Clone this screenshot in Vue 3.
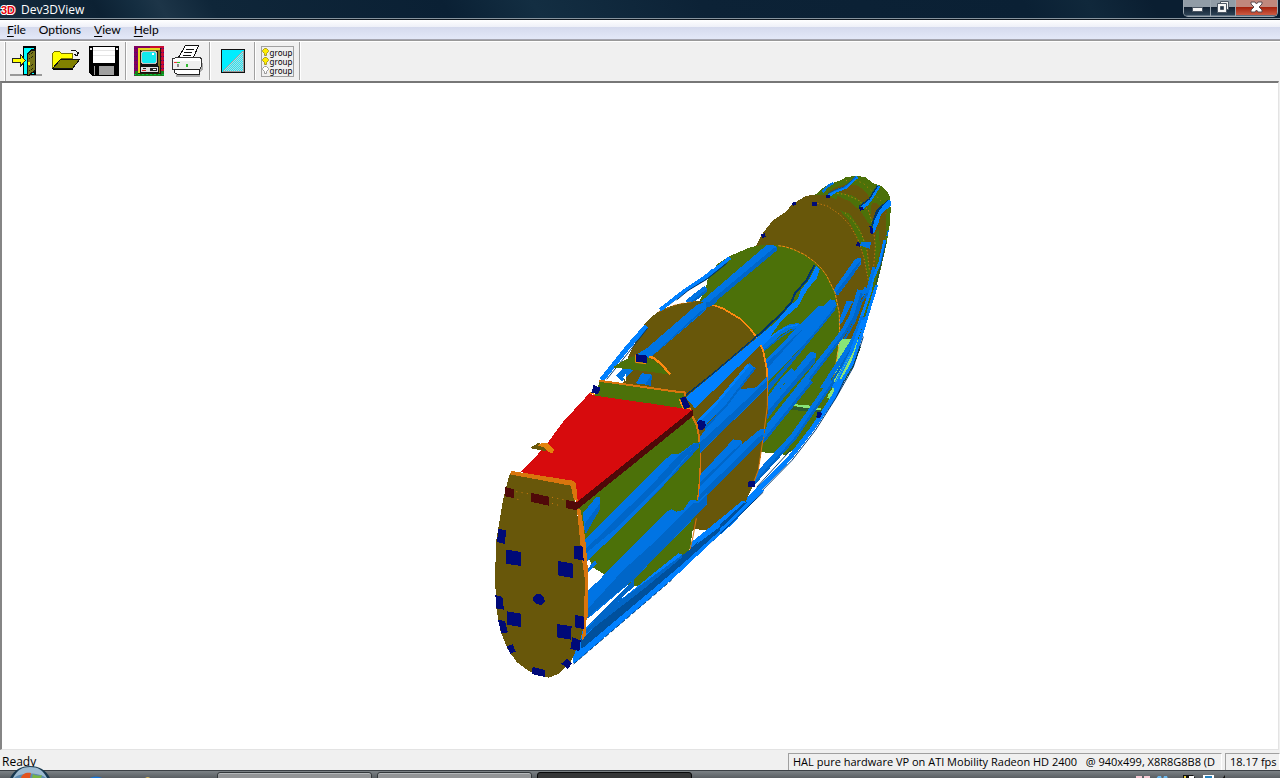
<script setup>
const menus = ['File', 'Options', 'View', 'Help']

const ORANGE = '#d9750d'
const GLOW = '#ff8a10'
const OLIVE = '#68570a'
const GREEN = '#4c7109'
const LIGHT = '#0080ff'
const MID = '#0074e4'
const SHADE = '#0066c8'
const DEEP = '#00509c'
const DARK = '#00366c'
const NAVY = '#000a78'
const WHITE = '#ffffff'
const MINT = '#88e577'
const MOSS = '#2d5a2d'

/* Every shape is [colour, points, stroke width?, dash?]; each layer has its own origin and is drawn at one third scale. */
const layers = [
  {
    name: 'tail', x: 740, y: 160,
    shapes: [
      [GREEN, '225,105 245,86 262,76 282,68 300,62 318,51 350,48 375,51 400,70 425,78 440,92 450,110 452,150 450,190 440,250 424,320 400,415 375,485 350,567 290,540 300,200'],
      [OLIVE, '262,98 285,82 318,73 350,75 372,90 390,112 380,125 350,112 320,106 290,105'],
      [OLIVE, '395,130 410,128 420,140 440,150 437,230 425,270 405,330 390,400 375,440 385,330 405,270 390,190'],
      [OLIVE, '290,98 330,96 372,120 398,175 405,260 400,330 370,460 345,540 280,540'],
      [GREEN, '270,95 300,97 340,108 372,130 398,180 400,210 382,184 360,152 330,125 290,106'],
      [GREEN, '407,220 417,210 420,270 408,320 405,280'],
      [GREEN, '320,58 350,50 378,52 398,70 424,80 444,102 446,140 430,138 415,120 390,90 360,72'],
      [GLOW, '318,62 345,60 370,70 400,98 425,125 437,160', 2, '3 11'],
      [GLOW, '270,98 315,103 355,120 385,150 400,200 406,260 400,330', 2, '4 7'],
      [OLIVE, '48,257 70,217 100,180 135,157 160,130 200,107 250,104 290,118 330,146 360,195 380,255 389,330 386,380 370,480 345,538 285,538 200,350'],
      [GREEN, '298,150 330,162 358,203 377,250 389,330 388,375 378,320 367,270 346,220 326,182'],
      [GLOW, '232,130 262,138 300,164 330,196 354,239 371,290 386,365', 2, '4 6'],
      [GLOW, '315,158 342,185 366,225 382,275 388,330', 2, '4 7'],
      [LIGHT, '264,108 288,93 317,82 352,50', 9],
      [DEEP, '264,101 284,91 314,80 348,50', 3],
      [MID, '248,96 264,78 281,69', 7],
      [LIGHT, '363,145 382,131 400,105 416,78', 10],
      [DARK, '358,139 388,117 399,99 412,78', 4],
      [DARK, '394,194 407,154 422,138 445,118 450,126 424,151 402,200'],
      [LIGHT, '397,207 402,184 420,148 445,119 454,125 452,138 434,153 423,163 416,187 401,222'],
      [MID, '363,246 393,245 390,267 380,263 360,257'],
      [NAVY, '258,105 270,105 270,113 258,113'],
      [NAVY, '356,142 368,140 371,149 360,152'],
      [NAVY, '388,198 397,200 400,222 391,220'],
      [NAVY, '350,246 360,248 359,260 349,258'],
      [NAVY, '216,126 231,126 231,137 216,137'],
      [NAVY, '155,130 165,125 170,132 160,137'],
      [NAVY, '63,222 74,220 78,231 67,234'],
      [MID, '346,296 363,294 363,312 295,405 278,402 285,383'],
      [SHADE, '357,306 363,304 340,345 292,407 285,400'],
      [MID, '320,422 340,423 305,490 294,499 298,480'],
      [MID, '445,210 441,228', 4],
      [LIGHT, '435,240 419,310 398,355 389,400 365,470 333,560', 9],
      [MID, '402,322 386,380 376,415', 10],
      [MID, '380,384 352,420 330,485 295,545', 13],
      [SHADE, '382,400 364,427 345,482 310,545', 6],
      [DARK, '437,250 416,340 400,405 375,475 351,560', 2]
    ]
  },
  {
    name: 'rear hull', x: 660, y: 230,
    shapes: [
      [MINT, '538,326 606,326 590,372 545,455 510,510 485,548 390,530 515,490'],
      [GREEN, '140,165 145,135 175,100 210,78 270,52 300,46 340,45 372,48 400,58 434,74 463,95 484,115 500,137 525,188 538,250 539,310 531,380 520,460 505,520 488,550 465,585 425,640 375,672 310,670 200,500 120,210'],
      [GLOW, '355,47 375,50 400,58 434,74 463,95 484,115 500,137 525,188 538,250 539,330 528,400 518,470', 3, '9 3'],
      [LIGHT, '0,240 70,185 140,140 210,83', 11],
      [DARK, '30,222 84,180 145,144 202,98', 3],
      [WHITE, '80,212 137,165 137,175 93,216'],
      [MID, '80,217 138,172', 13],
      [SHADE, '96,217 140,182', 7],
      [MID, '0,318 120,217 320,45 350,47 345,60 120,240 0,350'],
      [SHADE, '0,344 135,226 340,55 350,52 350,62 172,210 0,364'],
      [MINT, '390,523 435,524 485,536 486,542 440,537'],
      [MOSS, '385,528 440,533 490,543 485,550 400,540'],
      [MINT, '585,340 553,430 505,505', 12],
      [MOSS, '600,350 579,406 530,488', 6],
      [MINT, '535,472 505,510', 4, '4 4']
    ]
  },
  {
    name: 'rear stringers', x: 660, y: 230,
    shapes: [
      [MID, '280,375 325,340 360,307 390,290 419,286', 15],
      [LIGHT, '292,355 340,315 378,292 414,284', 4],
      [SHADE, '300,372 350,330 390,302 424,292', 4],
      [DARK, '463,106 440,150 405,190 394,217 365,250 290,320 165,427 80,510', 6],
      [LIGHT, '280,332 345,278 390,227 413,207 423,180 450,145 468,108 480,117 470,145 442,178 414,229 366,270 312,345 280,370'],
      [MID, '300,405 318,390 385,320 477,228 498,231 497,255 290,455'],
      [SHADE, '285,433 402,320 490,247 505,237 505,255 450,315 285,476'],
      [MID, '290,450 510,208 525,211 530,228 470,305 290,490'],
      [SHADE, '320,470 470,300 528,226 525,240 485,290 320,492'],
      [MID, '320,527 450,366 467,368 467,384 320,558'],
      [SHADE, '320,548 463,380 466,396 362,515 320,570'],
      [MID, '600,180 575,260 550,305 515,350 325,590', 16],
      [SHADE, '605,190 584,260 556,308 521,355 340,590', 7],
      [MID, '408,600 505,447 575,340 610,260', 14],
      [SHADE, '422,603 511,462 582,345', 7],
      [LIGHT, '610,270 574,365 520,475', 10],
      [MINT, '568,380 526,457', 3, '4 5'],
      [LIGHT, '650,165 625,245 606,310 577,400 530,480 480,565 430,630', 9],
      [DARK, '610,320 580,411 535,491 470,585 430,639', 3],
      [NAVY, '472,545 486,550 480,566 470,563']
    ]
  },
  {
    name: 'lower hull', x: 660, y: 380,
    shapes: [
      [WHITE, '310,217 375,224 330,280 280,325 290,275'],
      [GREEN, '310,215 310,170 440,30 515,20 487,88 430,180 380,225'],
      [MINT, '390,73 435,74 485,86 482,91 435,87'],
      [MOSS, '390,80 435,83 490,92 485,99 390,89'],
      [MID, '400,-30 370,0 320,68 305,100', 16],
      [MID, '450,0 325,152 280,213', 21],
      [SHADE, '456,4 334,155 284,217', 8],
      [MID, '515,2 398,170 274,305', 16],
      [SHADE, '522,4 406,175 280,314', 7],
      [LIGHT, '545,0 521,50 458,145 388,235 250,375', 14],
      [DARK, '392,210 290,322', 3],
      [DARK, '553,0 529,52 466,151 396,241 255,384', 3],
      [NAVY, '472,96 487,98 480,115 469,112']
    ]
  },
  {
    name: 'middle bulkhead', x: 580, y: 240,
    shapes: [
      [OLIVE, '130,430 145,350 195,250 215,230 240,212 270,199 300,191 350,183 385,187 430,205 480,235 508,262 530,290 551,330 562,400 563,520 550,600 536,690 515,745 490,800 455,845 420,870 335,870 250,500'],
      [GLOW, '381,188 430,206 480,236 508,263 530,292 549,330 560,385 562,410', 5],
      [ORANGE, '563,410 562,500 550,590 535,690 520,730', 3],
      [ORANGE, '236,215 290,193 345,184', 2, '15 7'],
      [LIGHT, '65,420 145,320 200,258', 15],
      [DARK, '80,418 145,338 203,264', 3],
      [LIGHT, '240,210 310,155 375,112 400,91', 11],
      [WHITE, '276,195 310,168 365,135 345,154 316,185'],
      [DARK, '290,180 325,151 380,118 438,72', 3],
      [MID, '172,342 200,325 350,195 380,184 378,210 210,354'],
      [SHADE, '211,352 360,215 379,205 378,185 411,184 400,195 379,204 350,232 225,341'],
      [MID, '108,408 130,384 170,350 172,380 125,425'],
      [WHITE, '90,411 108,388 120,386 103,414'],
      [WHITE, '137,401 130,413 138,424'],
      [MID, '168,430 185,400 214,402 214,436'],
      [SHADE, '195,433 215,404 214,438']
    ]
  },
  {
    name: 'side stringers', x: 660, y: 380,
    shapes: [
      [LIGHT, '77,52 285,-122 320,-150 335,-150 310,-112 105,85'],
      [DARK, '75,48 158,-19 290,-131', 4],
      [MID, '0,252 103,193 231,23 247,27 290,22 322,-10 322,22 115,225 0,330'],
      [SHADE, '0,290 118,190 250,68 322,0 322,20 118,220 0,334'],
      [MID, '123,133 185,67 277,-43', 25],
      [LIGHT, '112,128 179,58 265,-45', 8],
      [SHADE, '135,145 200,75 285,-36', 6],
      [NAVY, '110,127 120,120 134,124 138,136 131,148 118,151 108,143'],
      [MID, '120,285 220,178 246,182 247,192 300,148 314,148 310,175 112,370 112,342'],
      [SHADE, '120,307 245,188 240,200 121,318'],
      [SHADE, '119,345 295,172 310,162 309,178 112,375'],
      [WHITE, '102,448 155,450 95,492'],
      [MID, '0,415 24,390 50,390 92,360 110,360 107,378 0,505'],
      [SHADE, '0,470 107,370 105,382 0,510'],
      [LIGHT, '90,490 195,405 247,362 264,368 300,325 312,332 215,434 128,510 92,510'],
      [DEEP, '90,506 195,420 250,370 265,365 240,390 115,508'],
      [DARK, '310,336 210,433 130,508', 3],
      [NAVY, '266,302 286,302 284,322 263,320']
    ]
  },
  {
    name: 'forward bulkhead', x: 480, y: 340,
    shapes: [
      [GREEN, '290,500 480,350 632,215 650,260 659,310 662,360 657,460 644,530 630,625 603,690 575,718 530,737 460,740 400,720 340,683 310,620'],
      [ORANGE, '637,228 650,255 657,290 657,307', 6],
      [ORANGE, '662,340 660,400 656,455 652,480', 4],
      [ORANGE, '649,535 639,590 624,655 603,688', 3],
      [MID, '308,520 350,470 360,472 360,508 315,582'],
      [SHADE, '315,550 360,490 360,508 317,582'],
      [MID, '315,598 560,355 575,342 595,343 640,310 660,307 655,325 510,480 330,655 315,670'],
      [SHADE, '345,600 515,435 590,353 600,343 640,311 658,309 655,325 510,480 330,655 315,660 315,630'],
      [MID, '317,640 420,555 550,425 640,325 560,425 430,560 330,655 317,665'],
      [MID, '322,755 565,512 575,508 590,515 610,510 630,480 655,482 680,460 680,495 460,720 325,835 320,800'],
      [SHADE, '430,690 530,600 640,490 657,488 680,465 680,493 460,720 350,808 322,835 322,808'],
      [WHITE, '325,714 325,750 368,711 340,683'],
      [MID, '320,690 345,660 351,672 322,700'],
      [WHITE, '425,778 460,738 475,738 425,780'],
      [SHADE, '320,860 462,718 462,740 425,772 425,780 325,872']
    ]
  },
  {
    name: 'keel stringers', x: 480, y: 500,
    shapes: [
      [LIGHT, '280,402 315,385 595,160 615,167 720,60 720,99 280,491'],
      [DEEP, '302,420 370,358 520,235 600,171 720,80 720,92 610,190 305,449'],
      [LIGHT, '284,480 304,448 585,212 720,94 720,103 580,235 281,492'],
      [SHADE, '317,390 355,350 430,294 605,166 606,172 500,260 317,402'],
      [DARK, '281,492 575,240', 3, '14 7']
    ]
  },
  {
    name: 'cockpit', x: 480, y: 340,
    shapes: [
      [GREEN, '398,82 430,62 466,46 500,50 530,65 566,103 490,93'],
      [GLOW, '507,51 520,53 545,73 570,103', 7],
      [GLOW, '467,44 467,67 498,71', 3],
      [NAVY, '469,43 502,47 500,69 469,65'],
      [GREEN, '340,172 360,123 607,158 632,214 515,196'],
      [ORANGE, '356,122 604,157 614,157 614,167', 6],
      [GLOW, '599,178 610,208 632,207', 4],
      [GLOW, '330,158 344,163', 4],
      [NAVY, '341,135 362,144 354,163 334,158'],
      [NAVY, '600,174 616,170 631,201 613,208'],
      ['#d70b0d', '328,160 345,167 515,191 638,210 445,382 291,495 275,430 123,396 195,320 225,278 250,245'],
      ['#500909', '638,209 638,229 445,385 287,512 259,504 259,481 291,486 420,383'],
      [OLIVE, '150,324 175,309 199,318 198,334'],
      ['#e4830c', '172,316 185,309 202,310 216,322 224,329 216,340 202,333 190,322'],
      [OLIVE, '89,402 273,433 290,510 305,610 319,690 318,790 311,860 298,910 272,965 239,1000 206,1013 180,1008 145,992 109,965 82,925 62,875 49,805 45,710 49,600 70,475'],
      ['#d9750d', '89,403 95,393 278,422 288,432 293,483 282,480 272,437'],
      [ORANGE, '291,508 301,508 311,560 317,610 323,680 323,830 317,850 317,887 306,902 312,820 315,720 305,650'],
      ['#500909', '76,441 102,448 101,474 76,469'],
      ['#500909', '154,459 207,470 207,497 154,486'],
      ['#500909', '259,480 291,486 325,480 288,511 259,504'],
      [GLOW, '109,455 150,462', 2, '3 13'],
      [GLOW, '216,472 255,480', 2, '3 13'],
      [GLOW, '112,478 150,485', 2, '3 60'],
      [GLOW, '216,490 242,498', 2, '3 13']
    ]
  },
  {
    name: 'front slots', x: 480, y: 500,
    shapes: [
      [NAVY, '55,86 78,91 75,132 51,126'],
      [NAVY, '79,149 123,156 123,198 78,191'],
      [NAVY, '235,183 279,191 278,234 234,226'],
      [NAVY, '283,137 309,140 311,182 282,176'],
      [NAVY, '46,285 67,291 72,329 49,325'],
      [NAVY, '82,334 123,341 122,381 81,374'],
      [NAVY, '232,372 275,379 272,419 231,412'],
      [NAVY, '286,345 312,350 311,387 286,382'],
      [NAVY, '54,360 75,363 84,397 64,400'],
      [NAVY, '80,439 98,433 107,455 91,461'],
      [NAVY, '277,412 302,421 298,454 271,446'],
      [NAVY, '260,476 275,491 264,507 244,491'],
      [NAVY, '158,501 195,510 195,531 155,522'],
      [NAVY, '160,292 168,283 180,281 193,292 194,306 184,315 171,312 160,304']
    ]
  }
]
</script>

<template>
  <div class="desktop">
    <main class="window">
      <header class="titlebar">
        <svg class="logo" width="16" height="14" viewBox="0 0 16 14" aria-hidden="true">
          <text x="1" y="11">3D</text>
        </svg>
        <h1>Dev3DView</h1>
        <div class="controls">
          <button type="button" class="ctl min" aria-label="Minimize">
            <svg width="13" height="12"><path d="M1.500 6.500h10v4h-10z" fill="#f4f4f4" stroke="#4b5663" /></svg>
          </button>
          <button type="button" class="ctl max" aria-label="Restore">
            <svg width="13" height="12"><path d="M3.500.5h8v8h-8z" fill="#f4f4f4" stroke="#4b5663" /><path d="M.5 2.500h9v9h-9z" fill="#f4f4f4" stroke="#4b5663" /><path d="M3.500 5.500h3v3h-3z" fill="#243648" stroke="#4b5663" /></svg>
          </button>
          <button type="button" class="ctl close" aria-label="Close">
            <svg width="13" height="12"><path d="M1 1h4l1.500 2L8 1h4v2L9 6l3 3v2H8L6.500 9 5 11H1V9l3-3-3-3z" fill="#fff" stroke="#59494e" /></svg>
          </button>
        </div>
      </header>

      <nav class="menubar">
        <button v-for="m in menus" :key="m" type="button">
          <span v-if="m !== 'Options'"><u>{{ m[0] }}</u>{{ m.slice(1) }}</span>
          <span v-else>{{ m }}</span>
        </button>
      </nav>

      <div class="toolbar" role="toolbar">
        <button type="button" aria-label="Exit">
          <svg width="32" height="32" viewBox="0 0 32 32" shape-rendering="crispEdges">
            <path d="M0 29h32v2H0z" fill="#999" />
            <path d="M13 1h13v29H13z" fill="#000" /><path d="M14 3h10v26H14z" fill="#0ff" />
            <path d="M17 8l5-4h4v22l-7 5h-2z" fill="#111" /><path d="M18 9l4-3h3v19l-7 5z" fill="#77751a" />
            <path d="M19 10l5-3M19 14l5-3M19 22l5-3M19 26l5-3" stroke="#24240b" stroke-dasharray="1 1" /><path d="M18 17h2v3h-2z" fill="#ff0" />
            <path d="M2.500 13.500h8v-4l5 6-5 6v-4h-8z" fill="#ff0" stroke="#222" />
          </svg>
        </button>
        <button type="button" aria-label="Open">
          <svg width="32" height="32" viewBox="0 0 32 32" shape-rendering="crispEdges">
            <path d="M3.500 23.500v-15l2-2h5l2 2h11v5h-11l-6 10z" fill="#ff0" stroke="#777000" />
            <path d="M3.500 23.500l8-9h19l-7 9z" fill="#808000" stroke="#111" />
            <path d="M4 24h20" stroke="#000" /><path d="M22 5h4l2 2v3M25 9l3 2 2-4" stroke="#111" fill="none" />
          </svg>
        </button>
        <button type="button" aria-label="Save">
          <svg width="32" height="32" viewBox="0 0 32 32" shape-rendering="crispEdges">
            <path d="M1 1h30v30H4l-3-3z" fill="#000" /><path d="M5 2h22v16H5z" fill="#fff" />
            <path d="M5 5.500h22M5 10.500h22" stroke="#e4e4e4" /><path d="M2 3h2v2H2zM28 3h2v2h-2z" fill="#ddd" />
            <path d="M6 21h20v9H6z" fill="#a0a0a0" /><path d="M7 21h4v9H7z" fill="#000" />
          </svg>
        </button>
        <i class="sep"></i>
        <button type="button" aria-label="Display device">
          <svg width="32" height="32" viewBox="0 0 32 32" shape-rendering="crispEdges">
            <path d="M1 1h30v30H1z" fill="#82005e" /><path d="M17 1h14v25H17z" fill="#c90b32" /><path d="M2 26h29v5H2z" fill="#198019" />
            <path d="M1 3h4M1 7h4M1 11h4M1 15h4M1 19h4M1 23h4M28 3h3M28 7h3M28 11h3M28 15h3M28 19h3M28 23h3" stroke="#4d0877" stroke-dasharray="1 1" />
            <path d="M1 29h30" stroke="#00c040" stroke-dasharray="2 2" />
            <path d="M5 3h23v26H5z" fill="#2b1a08" /><path d="M5 3h22v2H7v23H5z" fill="#e5d820" /><path d="M8 5h19v23H8z" fill="#807020" />
            <path d="M8 6h17v15H8z" fill="#111" /><path d="M9 6h14l1 2v9l-2 2H9l-1-2V8z" fill="#c4c4c4" /><path d="M10 7h12l1 2v7l-2 2H10l-1-2V9z" fill="#12e8ee" />
            <path d="M19 8h2v2h-2z" fill="#fff" /><path d="M7 21h19v7H7z" fill="#111" /><path d="M8 22h17v5H8z" fill="#ddd" /><path d="M10 23h3v1h-3zM17 23h7v3h-7z" fill="#222" /><path d="M20 24h3v1h-3z" fill="#fff" /><path d="M9 25h4v1H9z" fill="#d22" />
          </svg>
        </button>
        <button type="button" aria-label="Print">
          <svg width="32" height="32" viewBox="0 0 32 32" shape-rendering="crispEdges">
            <path d="M5 18h26v7l-3 2v5H4v-5z" fill="#aaa" />
            <path d="M6.500 12.500l7-12h13l-5 12z" fill="#fff" stroke="#111" />
            <path d="M14 4h8M12 7h8M11 10h8" stroke="#111" />
            <path d="M.5 13.500l6-1h22l1 2v7l-2 3H.5z" fill="#fff" stroke="#333" /><path d="M1 16h27v8H1z" fill="#eee" />
            <path d="M2 17h6" stroke="#e33" /><path d="M5 17h3" stroke="#2c2" /><path d="M5 19h2v3H5z" fill="#888" /><path d="M14 19h2v3h-2z" fill="#3b3" />
            <path d="M2.500 24.500h25v5h-22l-3-2z" fill="#fff" stroke="#222" />
          </svg>
        </button>
        <i class="sep"></i>
        <button type="button" aria-label="Transparency">
          <svg width="24" height="24" viewBox="0 0 24 24" shape-rendering="crispEdges">
            <defs><pattern id="dither" width="2" height="2" patternUnits="userSpaceOnUse"><path d="M0 0h2v2H0z" fill="#20e5f3" /><path d="M0 0h1v1H0zM1 1h1v1H1z" fill="#b2dce0" /></pattern></defs>
            <path d="M.5.5h23v23H.5z" fill="#00edff" stroke="#111" /><path d="M22 2v20H2z" fill="url(#dither)" /><path d="M2 22L22 2" stroke="#8aa" />
            <path d="M1.500 22.500h21v-21" stroke="#999" fill="none" />
          </svg>
        </button>
        <i class="sep"></i>
        <button type="button" aria-label="Groups">
          <span class="groups">
            <span v-for="n in 3" :key="n" :class="['group', { off: n === 3 }]">
              <svg width="7" height="8" viewBox="0 0 7 8"><path d="M2.500.5h2l2 2v1l-2 2v2h-2v-2l-2-2v-1z" /></svg>group
            </span>
          </span>
        </button>
        <i class="sep"></i>
      </div>

      <section class="viewport">
        <svg class="scene" viewBox="2 83 1276 666" role="img" aria-label="Fuselage model" shape-rendering="crispEdges">
          <g v-for="layer in layers" :key="layer.name" :transform="`translate(${layer.x} ${layer.y}) scale(0.33333)`">
            <template v-for="(s, i) in layer.shapes" :key="i">
              <polyline v-if="s[2]" :points="s[1]" fill="none" :stroke="s[0]" :stroke-width="s[2]" :stroke-dasharray="s[3]" stroke-linejoin="round" />
              <polygon v-else :points="s[1]" :fill="s[0]" />
            </template>
          </g>
        </svg>
      </section>

      <footer class="status">
        <span class="ready">Ready</span>
        <span class="pane device">HAL pure hardware VP on ATI Mobility Radeon HD 2400 &nbsp; @ 940x499, X8R8G8B8 (D</span>
        <span class="pane fps">18.17 fps</span>
      </footer>
    </main>

    <footer class="taskbar">
      <button type="button" class="orb" aria-label="Start">
        <svg width="40" height="12" viewBox="0 0 40 12">
          <path d="M0 12C4 4 11 0 20 0s16 4 20 12z" fill="#17384f" /><path d="M3 12C7 4 12 1 20 1s13 3 17 11z" fill="#9dbbd2" />
          <path d="M4 12C10 6 30 6 36 12z" fill="#5d8bb0" /><path d="M11 12c1-4 5-6 10-5l-1 5z" fill="#e3541f" /><path d="M22 12l1-4c3 2 6 2 9 1l-1 3z" fill="#77b543" />
        </svg>
      </button>
      <svg class="quick" width="150" height="8"><path d="M18 8q8-5 16 0z" fill="#1474d8" /><path d="M74 8q4-4 7 0z" fill="#d6b75c" /></svg>
      <button type="button" class="task" aria-label="Task 1"></button>
      <button type="button" class="task doc" aria-label="Task 2"></button>
      <button type="button" class="task active" aria-label="Dev3DView"></button>
      <svg class="tray" width="92" height="8"><path d="M0 5h6v3H0zM8 5h6v3H8z" fill="#f5c9d2" /><path d="M20 8l2-3h3l1 3M27 8l1-3h3l1 3" fill="#6eb9ed" /><path d="M47 4h10l3 4H47z" fill="#111" /><path d="M48 5h2v3h-2z" fill="#edd445" /><path d="M53 5h5v3h-5z" fill="#fff" /><path d="M67 4h11v4H67z" fill="#fff" /><path d="M69 5h7v3h-7z" fill="#2682bd" /><path d="M86 8l3-4v4z" fill="#111" /></svg>
    </footer>
  </div>
</template>

<style>
html, body, #app { height: 100%; }
body { margin: 0; overflow: hidden; }
</style>

<style scoped>
.desktop { display: flex; flex-direction: column; height: 100vh; font: 12px/16px Lato, "Open Sans", sans-serif; color: #000; background: #f0f0f0; }
button { border: 0; padding: 0; margin: 0; background: none; font: inherit; color: inherit; }
svg { display: block; }
.window { flex: 1; min-height: 0; display: flex; flex-direction: column; }
.titlebar { flex: none; height: 20px; box-sizing: border-box; display: flex; align-items: flex-start; border-bottom: 1px solid #101820; box-shadow: inset 0 -1px #87949e; color: #fff; background: linear-gradient(60deg, #142b3e 0, #0c2133 8%, #142d40 11%, #1d3548 13%, #0f2639 17%, #0a2034 35%, #132e42 42%, #0c2236 55%, #0a2034 80%, #10283b 85%, #0a1e31 90%); }
.logo { margin-top: 3px; }
.logo text { font: bold 11px "Liberation Sans", sans-serif; fill: #e8000c; stroke: #fff; stroke-width: 2px; paint-order: stroke; }
h1 { flex: 1; margin: 2px 0 0 5px; font: 12px/16px "Open Sans", sans-serif; }
.controls { display: flex; height: 16px; margin-right: 2px; border: 1px solid #9ca7b0; border-top: 0; border-radius: 0 0 5px 5px; overflow: hidden; }
.ctl { display: flex; justify-content: center; align-items: flex-start; padding-top: 1px; box-shadow: inset 0 -1px #5f7080; }
.min { width: 26px; background: linear-gradient(#919ca6 0 7px, #101f30 7px, #31475a); }
.max { width: 25px; background: linear-gradient(#919ca6 0 7px, #101f30 7px, #31475a); border-left: 1px solid #9ca7b0; }
.close { width: 42px; background: linear-gradient(#c1887d 0 7px, #a3200c 7px, #d2634a); border-left: 1px solid #9ca7b0; }
.menubar { flex: none; display: flex; height: 20px; box-sizing: border-box; padding-left: 1px; background: linear-gradient(#fff 0, #eef0f8 7px, #d5daed 7px, #e2e7f7 18px); border-bottom: 1px solid #a5a5b0; }
.menubar button { padding: 0 6px; margin-right: 1px; line-height: 16px; }
.menubar u { text-underline-offset: 2px; }
.toolbar { flex: none; display: flex; align-items: center; height: 41px; box-sizing: border-box; padding-left: 6px; background: linear-gradient(90deg, transparent 4px, #fff 4px 5px, #aaa 5px 6px, transparent 6px), #f0f0f0; border-top: 1px solid #999; box-shadow: inset 0 1px #fff; }
.toolbar button { width: 39px; height: 38px; display: flex; align-items: center; justify-content: center; }
.sep { width: 2px; height: 38px; margin: 0 2px; box-sizing: border-box; border-left: 1px solid #a0a0a0; border-right: 1px solid #fff; }
.groups { border: 1px solid #a0a0a0; padding: 1px 1px 1px 0; display: grid; }
.group { display: flex; align-items: center; gap: 1px; height: 9px; font: 8px/9px "Noto Sans", sans-serif; }
.group svg { fill: #ffed00; stroke: #aa9c25; }
.group.off svg { fill: #fff; stroke: #999; }
.viewport { flex: 1; min-height: 0; border: 1px solid #e3e3e3; border-top: 2px solid #777; border-left: 2px solid #858585; margin: 0 1px 1px 0; background: #fff; }
.scene { width: 100%; height: 100%; }
.status { flex: none; display: flex; height: 19px; gap: 3px; overflow: hidden; font-family: "Open Sans", sans-serif; font-size: 11px; }
.ready { flex: 1; padding: 3px 2px 0; font-size: 12px; }
.pane { box-sizing: border-box; border: 1px solid #a0a0a0; border-right-color: #fff; border-bottom: 0; margin-top: 2px; padding-left: 4px; white-space: nowrap; overflow: hidden; line-height: 16px; }
.device { width: 434px; }
.fps { width: 55px; }
.taskbar { position: relative; flex: none; display: flex; height: 8px; box-sizing: border-box; border-top: 1px solid #3b4045; background: linear-gradient(#7b8185, #595e62); }
.orb { position: absolute; left: 10px; top: -5px; }
.quick { margin-left: 70px; margin-right: -3px; }
.task { width: 155px; height: 20px; margin-top: 1px; margin-right: 5px; flex: none; border: 1px solid #33383b; border-radius: 3px; box-shadow: inset 0 1px #b5b8ba; background: #929496; }
.task.doc { background: linear-gradient(90deg, transparent 7px, #fff 7px 23px, transparent 23px) 0 5px no-repeat, #929496; }
.task.active { background: #343536; border-color: #08090a; box-shadow: none; }
.tray { margin-left: auto; margin-right: 52px; }
</style>
